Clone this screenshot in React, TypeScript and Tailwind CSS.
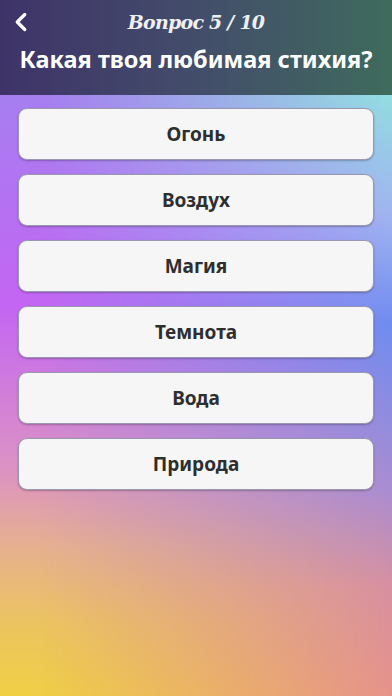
import { ChevronLeft } from "lucide-react";

const answers = ["Огонь", "Воздух", "Магия", "Темнота", "Вода", "Природа"];

export default function App() {
  return (
    <div className="flex h-[696px] w-[392px] flex-col overflow-hidden font-['Noto_Sans',sans-serif]">
      <header className="flex h-[95px] shrink-0 flex-col bg-[linear-gradient(to_right,#3e3368,#434d6b_50%,#3f6b5c)] text-white">
        <div className="relative flex h-[44px] items-center justify-center">
          <button className="absolute left-[6px] top-[7px] text-white">
            <ChevronLeft size={30} strokeWidth={2.6} />
          </button>
          <span className="font-['DejaVu_Serif',serif] text-[19px] font-bold italic tracking-[-0.04em] text-[#eef0f4]">
            Вопрос 5 / 10
          </span>
        </div>
        <h1 className="mt-[1px] text-center text-[23.5px] font-bold leading-tight">
          Какая твоя любимая стихия?
        </h1>
      </header>

      <main className="relative flex-1 bg-[linear-gradient(to_bottom,#a67ef0,#c366f3_35%,#dc92c4_62%,#e6b090_75%,#ecc460_88%,#f0cf45)]">
        <div className="absolute inset-0 bg-[linear-gradient(to_bottom,#92dee0,#a0b4f0_20%,#6f8cf0_38%,#aa8cd0_66%,#d890a0_82%,#e6928a)] [mask-image:linear-gradient(to_right,transparent_10%,black)]" />
        <div className="relative flex flex-col gap-[14px] px-[18px] pt-[13px]">
          {answers.map((a) => (
            <button
              key={a}
              className="flex h-[52px] items-center justify-center rounded-[9px] border border-[#9a98b0] bg-[#f6f6f6] text-[19px] font-bold text-[#2e2e2e] shadow-[0_1px_2px_rgba(0,0,0,0.25)]"
            >
              {a}
            </button>
          ))}
        </div>
      </main>
    </div>
  );
}
